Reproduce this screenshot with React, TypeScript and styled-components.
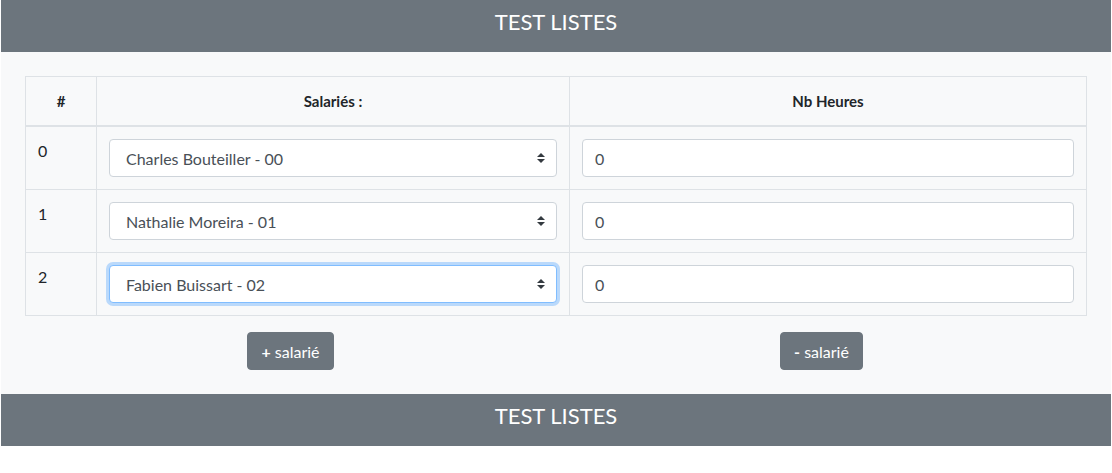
import React from 'react';
import styled, { createGlobalStyle } from 'styled-components';

const GlobalStyle = createGlobalStyle`
    body {
        margin: 0;
        background: #ffffff;
        font-family: Lato, "Open Sans", sans-serif;
        color: #212529;
    }
`;

const Page = styled.div`
    margin: 0 1px;
`;

const Banner = styled.header`
    box-sizing: border-box;
    height: 52px;
    padding-top: 8px;
    background: #6c757d;
    color: #ffffff;
    text-align: center;
    font-size: 22px;
    line-height: 28px;
    font-weight: 400;
`;

const Main = styled.main`
    background: #f8f9fa;
    padding: 24px;
`;

const Table = styled.table`
    width: 100%;
    table-layout: fixed;
    border-collapse: collapse;
    font-size: 16px;
`;

// widths are content widths (cell padding 12px each side plus the border come on top)
const HeadCell = styled.th<{ $width?: string }>`
    width: ${(p) => p.$width || 'auto'};
    border: 1px solid #dee2e6;
    border-bottom: 2px solid #dee2e6;
    padding: 12px;
    line-height: 24px;
    font-size: 15px;
    font-weight: 700;
    text-align: center;
`;

const Cell = styled.td`
    border: 1px solid #dee2e6;
    padding: 12px;
    line-height: 24px;
    vertical-align: top;
`;

const SelectWrap = styled.div`
    position: relative;
`;

const Select = styled.select<{ $focused?: boolean }>`
    appearance: none;
    width: 100%;
    height: 38px;
    padding: 6px 28px 6px 16px;
    font-family: inherit;
    font-size: 16px;
    color: #495057;
    background: #ffffff;
    border: 1px solid ${(p) => (p.$focused ? '#80bdff' : '#ced4da')};
    border-radius: 4px;
    box-shadow: ${(p) => (p.$focused ? '0 0 0 3px rgba(0, 123, 255, 0.25)' : 'none')};
    outline: none;
`;

const Arrows = styled.svg`
    position: absolute;
    right: 12px;
    top: 14px;
    pointer-events: none;
`;

const Input = styled.input`
    box-sizing: border-box;
    width: 100%;
    height: 38px;
    padding: 6px 12px;
    font-family: inherit;
    font-size: 16px;
    color: #495057;
    background: #ffffff;
    border: 1px solid #ced4da;
    border-radius: 4px;
    outline: none;
`;

const ButtonRow = styled.div`
    display: grid;
    grid-template-columns: 1fr 1fr;
    margin-top: 16px;
`;

const ButtonCell = styled.div`
    display: flex;
    justify-content: center;
`;

const Button = styled.button`
    height: 38px;
    padding: 0 13px;
    background: #6c757d;
    color: #ffffff;
    border: 1px solid #6c757d;
    border-radius: 4px;
    font-family: inherit;
    font-size: 16px;
    cursor: pointer;
`;

const Sign = styled.b`
    font-weight: 700;
`;

const employees = ['Charles Bouteiller - 00', 'Nathalie Moreira - 01', 'Fabien Buissart - 02'];

const App = () => (
    <Page>
        <GlobalStyle />
        <Banner>TEST LISTES</Banner>
        <Main>
            <Table>
                <thead>
                    <tr>
                        <HeadCell $width="46px">#</HeadCell>
                        <HeadCell $width="448px">Salariés :</HeadCell>
                        <HeadCell>Nb Heures</HeadCell>
                    </tr>
                </thead>
                <tbody>
                    {employees.map((name, i) => (
                        <tr key={name}>
                            <Cell>{i}</Cell>
                            <Cell>
                                <SelectWrap>
                                    <Select $focused={i === 2} defaultValue={name}>
                                        {employees.map((e) => (
                                            <option key={e}>{e}</option>
                                        ))}
                                    </Select>
                                    <Arrows width="8" height="10" viewBox="0 0 8 10">
                                        <path d="M4 0 L8 4 H0 Z M0 6 H8 L4 10 Z" fill="#343a40" />
                                    </Arrows>
                                </SelectWrap>
                            </Cell>
                            <Cell>
                                <Input defaultValue="0" />
                            </Cell>
                        </tr>
                    ))}
                </tbody>
            </Table>
            <ButtonRow>
                <ButtonCell>
                    <Button>
                        <Sign>+</Sign> salarié
                    </Button>
                </ButtonCell>
                <ButtonCell>
                    <Button>
                        <Sign>-</Sign> salarié
                    </Button>
                </ButtonCell>
            </ButtonRow>
        </Main>
        <Banner>TEST LISTES</Banner>
    </Page>
);

export default App;
